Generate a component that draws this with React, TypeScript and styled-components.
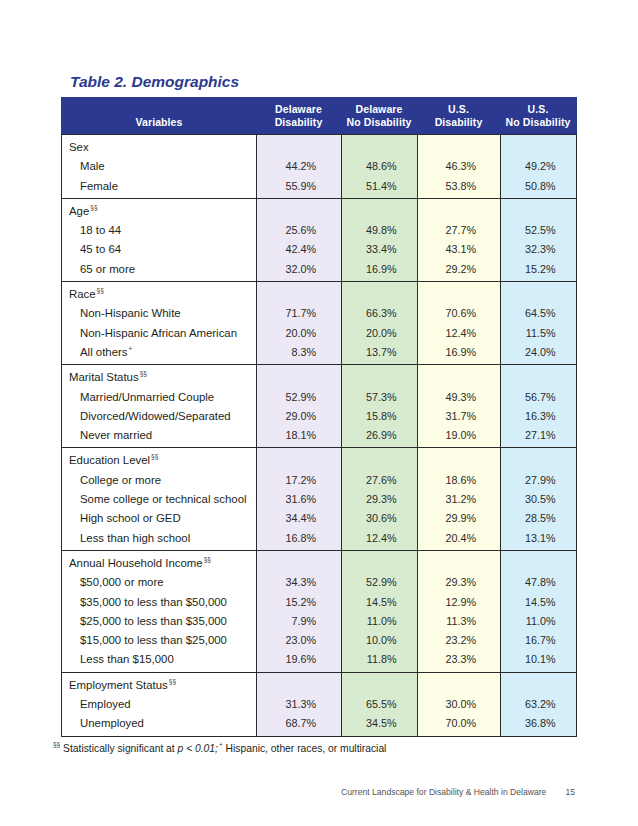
import React from 'react'
import styled, { createGlobalStyle } from 'styled-components'

const GlobalStyle = createGlobalStyle`
  body {
    margin: 0;
    background: #ffffff;
    font-family: "Liberation Sans", Arial, sans-serif;
    color: #231f20;
  }
`

const COLS = '194px 85px 76px 83px 76px'
const BLUE = '#2b3990'
const LINE = '#2a2a2a'
const COL_BG = ['#ede8f5', '#d8ebcf', '#fefde5', '#d5effa']

const Page = styled.div`
  width: 638px;
  height: 826px;
  padding-top: 73px;
  box-sizing: border-box;
  position: relative;
`

const Title = styled.h2`
  margin: 0 0 6px 70px;
  font-size: 15.5px;
  line-height: 18px;
  font-weight: 700;
  font-style: italic;
  color: ${BLUE};
`

const Table = styled.div`
  margin-left: 61px;
  width: 516px;
`

const HeaderRow = styled.div`
  display: grid;
  grid-template-columns: ${COLS};
  background: ${BLUE};
  height: 37px;
  border-left: 1px solid ${BLUE};
  border-right: 1px solid ${BLUE};
  color: #ffffff;
`

const HeadCell = styled.div`
  display: flex;
  flex-direction: column;
  justify-content: flex-end;
  align-items: center;
  padding-bottom: 5px;
  font-size: 10.5px;
  font-weight: 700;
  line-height: 13px;
  text-align: center;
  letter-spacing: 0.1px;
`

const Body = styled.div`
  border-left: 1px solid ${LINE};
  border-right: 1px solid ${LINE};
  border-bottom: 1px solid ${LINE};
`

const Section = styled.div`
  display: grid;
  grid-template-columns: ${COLS};
  border-top: 1px solid ${LINE};
`

const LabelCell = styled.div`
  padding: 3px 0 2px 0;
`

const ValueCell = styled.div<{ $bg: string }>`
  background: ${({ $bg }) => $bg};
  border-left: 1px solid ${LINE};
  padding: 3px 0 2px 0;
  text-align: center;
`

const Line = styled.div<{ $indent?: boolean }>`
  height: 19.3px;
  line-height: 19.3px;
  font-size: 11.4px;
  padding-left: ${({ $indent }) => ($indent ? '18px' : '7px')};
  white-space: nowrap;
`

const NumLine = styled.div`
  height: 19.3px;
  line-height: 19.3px;
  font-size: 10.8px;
  color: #2b2b2b;
`

const Num = styled.span`
  display: inline-block;
  width: 34px;
  text-align: right;
`

const Sup = styled.sup`
  font-size: 6.5px;
  line-height: 0;
  vertical-align: 5px;
  margin-left: 1px;
  color: #444;
`

const Note = styled.div`
  margin: 5px 0 0 52px;
  font-size: 10.3px;
  line-height: 14px;
`

const Ital = styled.i`
  font-style: italic;
`

const PageFooter = styled.div`
  display: flex;
  gap: 19px;
  margin: 30px 0 0 341px;
  font-size: 8.6px;
  line-height: 12px;
  color: #555;
`

type Row = [string, string, string, string, string]

interface Group {
  title: string
  sup?: boolean
  rows: Row[]
}

const groups: Group[] = [
  {
    title: 'Sex',
    rows: [
      ['Male', '44.2%', '48.6%', '46.3%', '49.2%'],
      ['Female', '55.9%', '51.4%', '53.8%', '50.8%'],
    ],
  },
  {
    title: 'Age',
    sup: true,
    rows: [
      ['18 to 44', '25.6%', '49.8%', '27.7%', '52.5%'],
      ['45 to 64', '42.4%', '33.4%', '43.1%', '32.3%'],
      ['65 or more', '32.0%', '16.9%', '29.2%', '15.2%'],
    ],
  },
  {
    title: 'Race',
    sup: true,
    rows: [
      ['Non-Hispanic White', '71.7%', '66.3%', '70.6%', '64.5%'],
      ['Non-Hispanic African American', '20.0%', '20.0%', '12.4%', '11.5%'],
      ['All others', '8.3%', '13.7%', '16.9%', '24.0%'],
    ],
  },
  {
    title: 'Marital Status',
    sup: true,
    rows: [
      ['Married/Unmarried Couple', '52.9%', '57.3%', '49.3%', '56.7%'],
      ['Divorced/Widowed/Separated', '29.0%', '15.8%', '31.7%', '16.3%'],
      ['Never married', '18.1%', '26.9%', '19.0%', '27.1%'],
    ],
  },
  {
    title: 'Education Level',
    sup: true,
    rows: [
      ['College or more', '17.2%', '27.6%', '18.6%', '27.9%'],
      ['Some college or technical school', '31.6%', '29.3%', '31.2%', '30.5%'],
      ['High school or GED', '34.4%', '30.6%', '29.9%', '28.5%'],
      ['Less than high school', '16.8%', '12.4%', '20.4%', '13.1%'],
    ],
  },
  {
    title: 'Annual Household Income',
    sup: true,
    rows: [
      ['$50,000 or more', '34.3%', '52.9%', '29.3%', '47.8%'],
      ['$35,000 to less than $50,000', '15.2%', '14.5%', '12.9%', '14.5%'],
      ['$25,000 to less than $35,000', '7.9%', '11.0%', '11.3%', '11.0%'],
      ['$15,000 to less than $25,000', '23.0%', '10.0%', '23.2%', '16.7%'],
      ['Less than $15,000', '19.6%', '11.8%', '23.3%', '10.1%'],
    ],
  },
  {
    title: 'Employment Status',
    sup: true,
    rows: [
      ['Employed', '31.3%', '65.5%', '30.0%', '63.2%'],
      ['Unemployed', '68.7%', '34.5%', '70.0%', '36.8%'],
    ],
  },
]

const headers = [
  ['Delaware', 'Disability'],
  ['Delaware', 'No Disability'],
  ['U.S.', 'Disability'],
  ['U.S.', 'No Disability'],
]

export default function App() {
  return (
    <Page>
      <GlobalStyle />
      <Title>Table 2. Demographics</Title>
      <Table>
        <HeaderRow>
          <HeadCell>Variables</HeadCell>
          {headers.map(([a, b]) => (
            <HeadCell key={a + b}>
              <span>{a}</span>
              <span>{b}</span>
            </HeadCell>
          ))}
        </HeaderRow>
        <Body>
          {groups.map((g) => (
            <Section key={g.title}>
              <LabelCell>
                <Line>
                  {g.title}
                  {g.sup && <Sup>§§</Sup>}
                </Line>
                {g.rows.map((r) => (
                  <Line $indent key={r[0]}>
                    {r[0]}
                    {r[0] === 'All others' && <Sup>+</Sup>}
                  </Line>
                ))}
              </LabelCell>
              {COL_BG.map((bg, ci) => (
                <ValueCell $bg={bg} key={bg}>
                  <NumLine />
                  {g.rows.map((r) => (
                    <NumLine key={r[0]}>
                      <Num>{r[ci + 1]}</Num>
                    </NumLine>
                  ))}
                </ValueCell>
              ))}
            </Section>
          ))}
        </Body>
      </Table>
      <Note>
        <Sup>§§</Sup> Statistically significant at <Ital>p &lt; 0.01;</Ital>
        <Sup>+</Sup> Hispanic, other races, or multiracial
      </Note>
      <PageFooter>
        <span>Current Landscape for Disability &amp; Health in Delaware</span>
        <span>15</span>
      </PageFooter>
    </Page>
  )
}
